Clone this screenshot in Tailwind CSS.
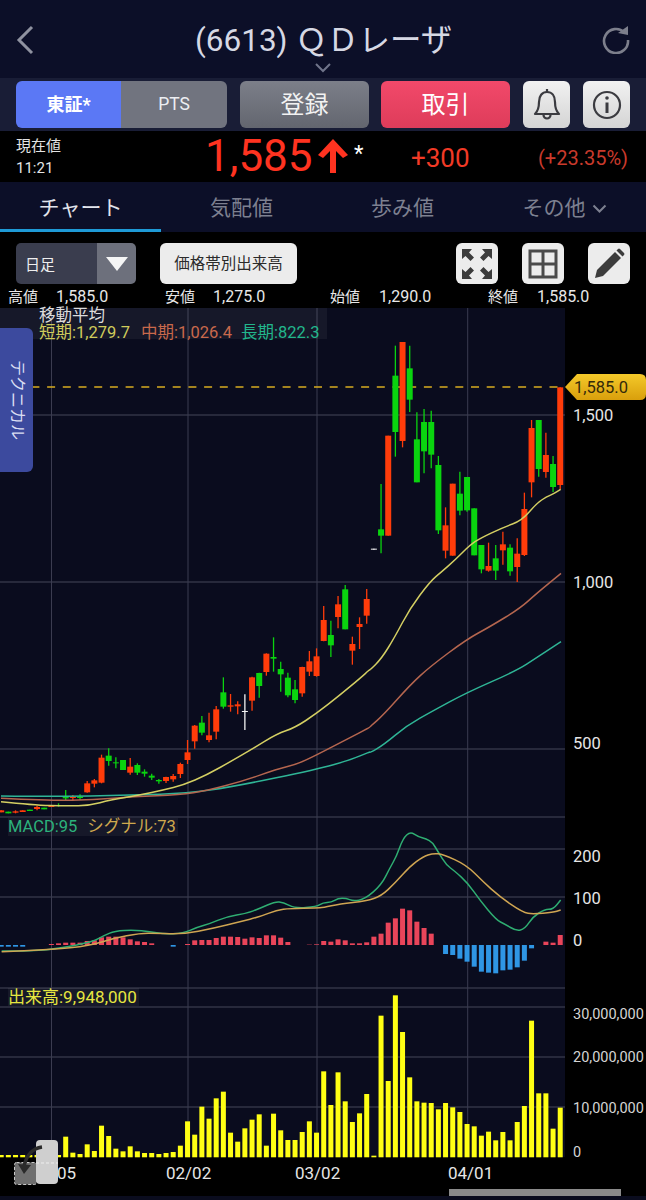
<!DOCTYPE html>
<html lang="ja">
<head>
  <meta charset="UTF-8" />
  <meta name="viewport" content="width=device-width,initial-scale=1" />
  <title>(6613) QDレーザ</title>
  <script src="https://cdn.jsdelivr.net/npm/@tailwindcss/browser@4"></script>
</head>
<body class="bg-black w-[646px] h-[1200px] overflow-hidden text-white font-['Roboto','Noto_Sans_CJK_JP',sans-serif]">
  <!-- ヘッダー -->
  <header class="relative h-[78px] bg-[#0c0f28] flex items-center justify-between pl-[15px] pr-[16px] pt-[1px]">
    <svg class="w-[20px] h-[32px]" viewBox="0 0 20 32" fill="none" stroke="#8f92a0" stroke-width="3"><path d="M17 3 L4 16 L17 29" /></svg>
    <h1 class="absolute left-[195px] top-[21px] text-[31.5px] leading-[40px] text-[#d6d8e4] whitespace-nowrap">(6613) ＱＤレーザ</h1>
    <svg class="absolute left-[314px] top-[62px] w-[18px] h-[11px]" viewBox="0 0 18 11" fill="none" stroke="#70748a" stroke-width="2"><path d="M2 2 L9 9 L16 2" /></svg>
    <svg class="w-[28px] h-[28px]" viewBox="0 0 28 28" fill="none"><path d="M22.5 6.5 A12 12 0 1 0 26 14" stroke="#7d7f8c" stroke-width="2.6" /><path d="M16 7 L26 9 L26 0 Z" fill="#7d7f8c" /></svg>
  </header>

  <!-- ボタン列 -->
  <div class="h-[53px] bg-[#191d36] flex items-start pt-[3px] pl-[16px]">
    <div class="flex w-[211px] h-[47px] rounded-[6px] overflow-hidden">
      <div class="w-[105px] bg-[#5b78f5] flex items-center justify-center text-[18px] font-bold">東証*</div>
      <div class="flex-1 bg-[#71747f] flex items-center justify-center text-[17.5px] text-[#eceef2]">PTS</div>
    </div>
    <div class="ml-[13px] w-[129px] h-[47px] rounded-[6px] bg-gradient-to-b from-[#7c7f89] to-[#63666f] flex items-center justify-center text-[24px] text-[#f2f2f2]">登録</div>
    <div class="ml-[12px] w-[129px] h-[47px] rounded-[6px] bg-gradient-to-b from-[#f2496a] to-[#de3c5a] flex items-center justify-center text-[24px]">取引</div>
    <div class="ml-[13px] w-[47px] h-[47px] rounded-[6px] bg-gradient-to-b from-[#f2f2f2] to-[#d4d4d4] flex items-center justify-center">
      <svg class="w-[30px] h-[36px]" viewBox="0 0 30 36" fill="none" stroke="#3b3b40" stroke-width="2.2"><path d="M3 27 C7 23 7 19 7 15 C7 9 10 5 15 5 C20 5 23 9 23 15 C23 19 23 23 27 27 Z" stroke-linejoin="round" /><path d="M15 2 V5" /><path d="M11.5 28 A3.5 3.5 0 0 0 18.5 28" /></svg>
    </div>
    <div class="ml-[13px] w-[47px] h-[47px] rounded-[6px] bg-gradient-to-b from-[#f2f2f2] to-[#d4d4d4] flex items-center justify-center">
      <svg class="w-[30px] h-[30px]" viewBox="0 0 30 30" fill="none" stroke="#3b3b40" stroke-width="2.2"><circle cx="15" cy="15" r="13" /><path d="M15 12.5 V23" stroke-width="3" /><circle cx="15" cy="8" r="1.8" fill="#3b3b40" stroke="none" /></svg>
    </div>
  </div>

  <!-- 現在値 -->
  <div class="relative h-[51px] bg-black">
    <div class="absolute left-[16px] top-[5px] text-[15px] leading-[20px] text-[#e4e4e4]">現在値</div>
    <div class="absolute left-[16px] top-[27px] text-[15px] leading-[20px] text-[#e4e4e4]">11:21</div>
    <div class="absolute left-[205px] top-[1px] text-[44px] leading-[48px] text-[#ff3320] flex items-center">1,585
      <svg class="w-[32px] h-[36px] ml-[4px]" viewBox="0 0 32 36" fill="#ff3320"><path d="M16 1 L31 17 L26 20 L19 13 V35 H13 V13 L6 20 L1 17 Z" /></svg>
    </div>
    <div class="absolute left-[354px] top-[11px] text-[22px] leading-[24px] text-white">*</div>
    <div class="absolute left-[411px] top-[12px] text-[26px] leading-[30px] text-[#f23a26]">+300</div>
    <div class="absolute left-[538px] top-[15px] text-[20px] leading-[24px] text-[#c93a2c] whitespace-nowrap">(+23.35%)</div>
  </div>

  <!-- タブ -->
  <nav class="h-[50px] bg-[#0c0f28] flex text-[21px] text-[#7d8090]">
    <div class="w-[161px] flex items-center justify-center text-[#e2e4ec] border-b-[3px] border-[#1e9ad6] pt-[6px]">チャート</div>
    <div class="w-[161px] flex items-center justify-center pt-[3px]">気配値</div>
    <div class="w-[161px] flex items-center justify-center pt-[3px]">歩み値</div>
    <div class="w-[163px] flex items-center justify-center pt-[3px] gap-[6px]">その他
      <svg class="w-[15px] h-[10px]" viewBox="0 0 15 10" fill="none" stroke="#7d8090" stroke-width="2"><path d="M1.5 1.5 L7.5 7.5 L13.5 1.5" /></svg>
    </div>
  </nav>

  <!-- ツールバー -->
  <div class="h-[52px] bg-black flex items-start pt-[11px] pl-[16px]">
    <div class="flex w-[120px] h-[41px] rounded-[5px] overflow-hidden">
      <div class="w-[81px] bg-[#3a3d4e] flex items-center pl-[9px] pt-[3px] text-[15px] text-[#eeeeee]">日足</div>
      <div class="flex-1 bg-[#6d707c] flex items-center justify-center">
        <svg class="w-[24px] h-[16px]" viewBox="0 0 24 16" fill="#f5f5f5"><path d="M1 1 H23 L12 15 Z" /></svg>
      </div>
    </div>
    <div class="ml-[24px] w-[137px] h-[41px] rounded-[6px] bg-[#ececec] flex items-center justify-center pt-[2px] text-[15.5px] text-[#2b2b2b]">価格帯別出来高</div>
    <div class="ml-[159px] w-[42px] h-[41px] rounded-[6px] bg-[#ececec] flex items-center justify-center">
      <svg class="w-[34px] h-[34px]" viewBox="0 0 34 34" fill="#3c3c3c"><path d="M2 2 H12 L9 5.5 L14 10.5 L10.5 14 L5.5 9 L2 12 Z" /><path d="M32 2 H22 L25 5.5 L20 10.5 L23.5 14 L28.5 9 L32 12 Z" /><path d="M2 32 H12 L9 28.5 L14 23.5 L10.5 20 L5.5 25 L2 22 Z" /><path d="M32 32 H22 L25 28.5 L20 23.5 L23.5 20 L28.5 25 L32 22 Z" /></svg>
    </div>
    <div class="ml-[24px] w-[42px] h-[41px] rounded-[6px] bg-[#ececec] flex items-center justify-center">
      <svg class="w-[30px] h-[30px]" viewBox="0 0 30 30" fill="none" stroke="#4a4a4a" stroke-width="3"><rect x="2" y="2" width="26" height="26" /><path d="M15 2 V28 M2 15 H28" /></svg>
    </div>
    <div class="ml-[24px] w-[42px] h-[41px] rounded-[6px] bg-[#ececec] flex items-center justify-center">
      <svg class="w-[32px] h-[32px]" viewBox="0 0 32 32" fill="#3c3c3c"><path d="M2 30 L4 22 L22 4 L28 10 L10 28 Z" /><path d="M23.5 2.5 L25 1 Q26 0.2 27 1 L31 5 Q31.8 6 31 7 L29.5 8.5 Z" /></svg>
    </div>
  </div>

  <!-- 四本値 -->
  <div class="relative h-[24px] text-[15px] leading-[26px] text-[#e8e8e8] whitespace-nowrap">
    <span class="absolute left-[8px] top-0">高値</span><span class="absolute left-[56px] top-0 text-[16px]">1,585.0</span>
    <span class="absolute left-[165px] top-0">安値</span><span class="absolute left-[213px] top-0 text-[16px]">1,275.0</span>
    <span class="absolute left-[330px] top-0">始値</span><span class="absolute left-[379px] top-0 text-[16px]">1,290.0</span>
    <span class="absolute left-[488px] top-0">終値</span><span class="absolute left-[537px] top-0 text-[16px]">1,585.0</span>
  </div>

  <!-- チャート -->
  <div class="relative h-[892px]">
    <svg id="chart" class="block w-[646px] h-[892px]" viewBox="0 308 646 892" font-family="Roboto, 'Noto Sans CJK JP', sans-serif">
      <defs>
        <linearGradient id="gold" x1="0" y1="0" x2="0" y2="1">
          <stop offset="0" stop-color="#f4c92a" /><stop offset="1" stop-color="#d99f0c" />
        </linearGradient>
      </defs>
      <rect x="0" y="308" width="565" height="849" fill="#0a0c1e" />
      <rect x="0" y="1196" width="646" height="4" fill="#0a0c1e" />
      <g id="grid"></g>
      <g id="series"></g>
      <path d="M565 387 L577 374 H640 Q646 374 646 380 V394 Q646 400 640 400 H577 Z" fill="url(#gold)" />
      <g font-size="16.5" fill="#e6e6e6">
        <text x="574" y="393" fill="#33290a">1,585.0</text>
        <text x="573" y="421">1,500</text>
        <text x="573" y="588">1,000</text>
        <text x="573" y="749">500</text>
        <text x="573" y="862">200</text>
        <text x="573" y="904">100</text>
        <text x="573" y="946">0</text>
      </g>
      <g font-size="14.5" fill="#d4d4d4">
        <text x="573" y="1019">30,000,000</text>
        <text x="573" y="1062">20,000,000</text>
        <text x="573" y="1113">10,000,000</text>
        <text x="573" y="1157">0</text>
      </g>
      <g font-size="17" fill="#e6e6e6">
        <text x="57" y="1179">05</text>
        <text x="166" y="1179">02/02</text>
        <text x="295" y="1179">03/02</text>
        <text x="448" y="1179">04/01</text>
      </g>
      <rect x="449" y="1189" width="172" height="7" fill="#8a8a8a" />
      <!-- 左下のアイコン -->
      <rect x="14.5" y="1162.5" width="22" height="22" rx="2" fill="#6f6f6f" stroke="#c8c8c8" stroke-dasharray="3 2" />
      <rect x="36" y="1140" width="22" height="44" rx="4" fill="#cfcfcf" />
      <path d="M36 1163 H58" stroke="#eeeeee" stroke-dasharray="3 2" />
      <path d="M42 1147 Q28 1149 24 1166" fill="none" stroke="#2a2a2a" stroke-width="3.5" />
      <path d="M18 1164 L31 1165 L24 1174 Z" fill="#2a2a2a" />
    </svg>

    <!-- 凡例 -->
    <div class="absolute left-0 top-0 w-[327px] h-[31px] bg-white/5"></div>
    <div class="absolute left-[39px] top-[-1px] text-[16.5px] leading-[18px] text-[#dcdcdc] whitespace-nowrap">移動平均</div>
    <div class="absolute left-[39px] top-[15px] text-[16.5px] leading-[19px] whitespace-nowrap flex">
      <span class="w-[102px] text-[#d0cc5c]">短期:1,279.7</span>
      <span class="w-[100px] text-[#c9694c]">中期:1,026.4</span>
      <span class="text-[#22b68c]">長期:822.3</span>
    </div>
    <div class="absolute left-0 top-[20px] w-[33px] h-[144px] rounded-r-[6px] bg-[#3c4a9e] flex items-center justify-center">
      <span class="[writing-mode:vertical-rl] [text-orientation:sideways] text-[16px] text-[#d9ddf2]">テクニカル</span>
    </div>
    <div class="absolute left-[8px] top-[510px] text-[16.5px] leading-[18px] whitespace-nowrap bg-white/5 pr-[2px]">
      <span class="text-[#2cb27c]">MACD:95</span><span class="text-[#cfa94e] ml-[10px]">シグナル:73</span>
    </div>
    <div class="absolute left-[8px] top-[680px] text-[17px] leading-[18px] text-[#e6e640] whitespace-nowrap bg-white/5 pr-[2px]">出来高:9,948,000</div>
  </div>

  <script>
    // チャート描画（座標はページ座標そのまま）
    const NS = 'http://www.w3.org/2000/svg';
    function add(parent, tag, attrs) {
      const el = document.createElementNS(NS, tag);
      for (const k in attrs) el.setAttribute(k, attrs[k]);
      parent.appendChild(el);
    }
    const grid = document.getElementById('grid');
    const series = document.getElementById('series');
    const xOf = i => 65.7 + 7.167 * i;

    [415, 582, 749, 817, 849, 897, 988, 1007, 1057, 1107].forEach(y => {
      add(grid, 'line', { x1: 0, x2: 565, y1: y, y2: y, stroke: '#454659', 'stroke-width': 1.2 });
    });
    [51.5, 188, 317, 467.7].forEach(x => {
      add(grid, 'line', { x1: x, x2: x, y1: 308, y2: 1157, stroke: '#3b3c50', 'stroke-width': 1 });
    });
    add(grid, 'line', { x1: 0, x2: 565, y1: 387, y2: 387, stroke: '#d8ac20', 'stroke-width': 1.3, 'stroke-dasharray': '8 7.7' });

    // 折れ線は中点を結ぶ二次曲線でなめらかにする
    function line(points, color, width) {
      let d = 'M' + points[0].join(' ');
      for (let i = 1; i < points.length - 1; i++) {
        const mx = (points[i][0] + points[i + 1][0]) / 2, my = (points[i][1] + points[i + 1][1]) / 2;
        d += ' Q' + points[i].join(' ') + ' ' + mx + ' ' + my;
      }
      d += ' L' + points[points.length - 1].join(' ');
      add(series, 'path', { d, fill: 'none', stroke: color, 'stroke-width': width, 'stroke-linejoin': 'round' });
    }
    const z4 = a => a.map(p => [p[0] / 3, 580 + p[1] / 3]);
    const z9 = a => a.map(p => [370 + p[0] / 3, 560 + p[1] / 3]);
    const z3 = a => a.map(p => [340 + p[0] / 3, 330 + p[1] / 3]);

    // ローソク足 [index, 色, 実体上, 実体下, ヒゲ上, ヒゲ下]
    const c4 = [
      [-9,'r',691,697,691,697],[-8,'g',695,700,695,700],[-7,'r',694,698,691,700],[-6,'r',691,696,691,696],[-5,'g',689,693,689,693],
      [-4,'r',681,687,677,691],[-3,'g',683,688,683,688],[-2,'r',676,681,676,681],[-1,'g',675,678,670,680],
      [0,'g',650,655,630,660],[1,'r',650,654,645,662],[2,'g',650,654,643,660],[3,'r',610,637,603,638],[4,'r',601,611,597,622],
      [5,'r',533,608,524,610],[6,'g',527,543,505,557],[7,'g',547,550,532,565],[8,'g',540,570,540,570],[9,'r',560,578,534,584],
      [10,'g',555,578,550,585],[11,'g',575,581,568,590],[12,'g',587,593,581,600],[13,'g',600,604,597,611],[14,'r',591,603,590,609],
      [15,'r',588,598,582,605],[16,'r',552,582,548,594],[17,'r',517,540,480,552],[18,'r',437,484,435,506],[19,'g',428,458,408,466],
      [20,'r',466,480,398,487],[21,'r',388,455,378,478],[22,'g',337,380,292,386],[23,'r',376,380,342,395],[24,'r',373,379,364,403],
      [25,'w',393,396,343,450],[26,'r',292,362,290,392],[27,'g',279,318,278,353],[28,'r',221,276,220,287],[29,'g',231,236,172,275],
      [30,'g',267,283,245,335],[31,'g',293,346,278,352],[32,'g',328,360,300,370],[33,'r',261,340,260,350],[34,'r',244,275,213,288],
      [35,'r',229,288,205,290],[36,'r',120,183,78,184],[37,'g',165,196,122,231],[38,'r',73,111,48,145],[39,'g',28,148,15,148],
      [40,'r',192,212,170,254],[41,'r',132,141,112,207],[42,'r',57,107,27,131]
    ];
    const c3 = [
      [43,'w',656,659,656,659],[44,'g',598,617,462,670],[45,'r',317,617,317,617],[46,'g',137,306,47,380],[47,'r',36,333,36,352],
      [48,'g',115,209,47,246],[49,'g',328,457,247,457],[50,'g',276,364,237,430],[51,'g',276,374,242,415],[52,'g',405,601,378,612],
      [53,'r',586,662,532,685],[54,'r',461,677,461,677],[55,'g',491,542,425,556],[56,'g',441,541,441,545],[57,'g',535,676,535,676],
      [58,'g',645,718,645,730],[59,'r',708,722,638,725],[60,'g',685,722,645,750],[61,'r',643,661,605,704],[62,'g',653,724,643,737],
      [63,'r',671,711,625,756],[64,'r',537,675,488,678],[65,'r',294,457,270,502],[66,'g',270,417,270,440],[67,'r',375,426,308,443],
      [68,'g',402,471,378,486],[69,'r',172,465,172,478]
    ];
    const candleColor = { r: '#ff3c0a', g: '#0ad40f', w: '#f4f4f4' };
    function candle(c, oy) {
      const x = xOf(c[0]), col = candleColor[c[1]];
      add(series, 'line', { x1: x, x2: x, y1: oy + c[4] / 3, y2: oy + c[5] / 3, stroke: col, 'stroke-width': 1.3 });
      add(series, 'rect', { x: x - 3, y: oy + c[2] / 3, width: 6, height: (c[3] - c[2]) / 3, fill: col });
    }
    c4.forEach(c => candle(c, 580));
    c3.forEach(c => candle(c, 330));

    line(z4([[3,648],[200,650],[400,645],[560,640],[700,620],[950,568],[1050,540],[1110,515]])
      .concat(z9([[0,578],[40,555],[110,497],[190,452],[290,398],[440,332],[500,293],[573,245]])), '#2fb596', 1.5);
    line(z4([[3,655],[150,662],[280,660],[400,650],[540,645],[620,632],[730,603],[830,568],[890,553],[950,525],[1040,478],[1110,442]])
      .concat(z9([[0,500],[40,465],[120,375],[180,320],[290,238],[360,200],[450,145],[500,100],[573,40]])), '#b5664f', 1.5);
    line(z4([[3,665],[100,675],[200,678],[270,676],[330,660],[420,645],[490,630],[550,615],[620,585],[700,540],[760,505],[830,462],[885,443],[950,400],[1020,345],[1080,295],[1110,268]])
      .concat(z9([[0,330],[35,295],[75,230],[120,145],[180,65],[215,35],[255,0]]))
      .concat(z3([[390,645],[420,625],[490,592],[545,572],[590,520],[620,500],[640,492],[662,478]])), '#d4cf63', 1.5);

    // MACD ヒストグラム（ゼロは y=945、値は拡大図の座標）
    const hist = { '-2':387,'-1':385,0:383,1:383,2:383,3:378,4:376,5:367,6:365,7:365,8:367,9:373,10:379,11:381,12:385,
      17:387,18:376,19:375,20:375,21:369,22:365,23:365,24:366,25:371,26:367,27:369,28:361,29:361,30:368,31:381,34:389,35:388,
      36:378,37:380,38:373,39:376,40:385,41:385,42:382,43:365,44:356,45:323,46:310,47:281,48:286,49:320,50:339,51:356,
      53:417,54:420,55:431,56:440,57:455,58:470,59:473,60:475,61:466,62:464,63:457,64:437,65:400,67:380,68:383,69:360,
      '-9':395,'-8':395,'-7':395,'-6':395,15:395 };
    for (const k in hist) {
      const y = 815 + hist[k] / 3, x = xOf(+k) - 2.5;
      if (y < 945) add(series, 'rect', { x, y, width: 5, height: 945 - y, fill: '#e9455a' });
      else add(series, 'rect', { x, y: 945, width: 5, height: y - 945, fill: '#2f96e4' });
    }
    const z5 = a => a.map(p => [p[0] / 3, 815 + p[1] / 3]);
    const z6 = a => a.map(p => [323 + p[0] / 3, 815 + p[1] / 3]);
    line(z5([[5,408],[100,408],[180,400],[280,380],[310,362],[345,348],[400,345],[450,350],[490,357],[550,355],[590,337],[630,326],[680,305],[740,295],[780,280],[825,260],[850,262],[885,280],[950,275]])
      .concat(z6([[0,263],[25,262],[45,250],[70,250],[90,258],[125,253],[175,210],[200,160],[220,125],[240,70],[262,50],[285,65],[310,72],[328,82],[345,110],[370,150],[395,168],[435,205],[470,255],[520,315],[545,327],[580,348],[605,342],[630,305],[665,283],[690,283],[713,255]])), '#2fae72', 1.5);
    line(z5([[5,410],[150,405],[270,392],[340,370],[420,355],[470,355],[550,357],[640,340],[720,320],[780,305],[830,285],[870,280],[950,279]])
      .concat(z6([[0,278],[50,267],[130,258],[175,243],[215,205],[260,155],[300,125],[330,115],[360,118],[430,150],[480,200],[530,245],[600,293],[630,297],[690,292],[713,285]])), '#cfa552', 1.5);

    // 出来高（基準 y=1157.3）
    const vol = [455,503,507,478,498,422,453,491,499,484,499,504,504,507,504,501,482,409,449,365,401,340,320,443,470,430,404,388,482,386,436,465,465,441,409,443,
      259,360,262,349,411,385,327,512,92,288,31,141,277,349,353,354,373,354,367,381,417,424,452,440,466,441,466,411,363,107,325,325,431,368];
    vol.forEach((t, i) => {
      const y = 985 + t / 3;
      add(series, 'rect', { x: xOf(i) - 2.5, y, width: 5, height: 1157.3 - y, fill: '#ffff14' });
    });
    for (let i = -9; i < 0; i++) {
      add(series, 'rect', { x: xOf(i) - 2.5, y: 1155, width: 5, height: 2.3, fill: '#ffff14' });
    }
  </script>
</body>
</html>
